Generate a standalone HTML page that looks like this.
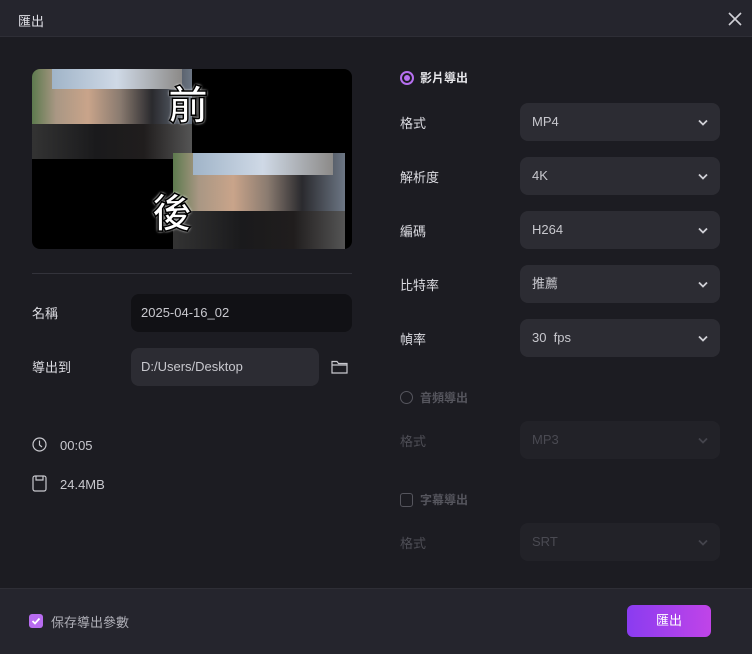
<!DOCTYPE html><html><head><meta charset="utf-8"><style>
*{margin:0;padding:0;box-sizing:border-box}
body{width:752px;height:654px;background:#1c1c22;font-family:"Liberation Sans","Noto Sans CJK TC",sans-serif;color:#d8d8de;font-size:13px;position:relative;overflow:hidden}
.a{position:absolute}
.hdr{left:0;top:0;width:752px;height:37px;background:#25252d;border-bottom:1px solid #2e2e36}
.ftr{left:0;top:588px;width:752px;height:66px;background:#25252d;border-top:1px solid #2e2e36}
.lbl{font-size:13px;color:#dcdce2}
.sel{width:200px;height:38px;background:#2c2c33;border-radius:8px;left:520px;padding-left:12px;line-height:38px;color:#c8c8ce}
.sel.d{background:#222228;color:#4a4a52}
.sel svg{position:absolute;right:12px;top:16px}
.photo{background:linear-gradient(90deg,#5d7a4e 0%,#a99784 15%,#c9a48a 35%,#8a7b70 55%,#2a2a2e 75%,#6c7684 100%)}
</style></head><body>
<div class="a hdr"></div>
<div class="a" style="left:18px;top:11px;font-size:13px;color:#e0e0e6">匯出</div>
<svg class="a" style="left:728px;top:12px" width="14" height="14"><path d="M1 1L13 13M13 1L1 13" stroke="#d0d0d6" stroke-width="1.6"/></svg>

<div class="a" style="left:32px;top:69px;width:320px;height:180px;background:#000;border-radius:8px;overflow:hidden">
 <div class="a photo" style="left:0;top:0;width:160px;height:90px"><div class="a" style="left:0;top:55px;width:160px;height:35px;background:linear-gradient(90deg,#333,#1a1a1c 40%,#201d1d 70%,#555)"></div><div class="a" style="left:20px;top:0;width:130px;height:20px;background:linear-gradient(90deg,#a0b4c8,#cfd9e6,#8c8a88)"></div></div>
 <div class="a photo" style="left:141px;top:84px;width:172px;height:96px"><div class="a" style="left:0;top:58px;width:172px;height:38px;background:linear-gradient(90deg,#333,#1a1a1c 40%,#201d1d 70%,#555)"></div><div class="a" style="left:20px;top:0;width:140px;height:22px;background:linear-gradient(90deg,#a0b4c8,#cfd9e6,#8c8a88)"></div></div>
 <div class="a" style="left:136px;top:4px;font-size:40px;font-weight:bold;color:#fff;-webkit-text-stroke:1.5px #000;text-shadow:0 0 3px #fff,0 0 2px #fff;font-family:'Noto Sans CJK TC',sans-serif">前</div>
 <div class="a" style="left:120px;top:112px;font-size:40px;font-weight:bold;color:#fff;-webkit-text-stroke:1.5px #000;text-shadow:0 0 3px #fff,0 0 2px #fff;font-family:'Noto Sans CJK TC',sans-serif">後</div>
</div>
<div class="a" style="left:32px;top:273px;width:320px;height:1px;background:#33333b"></div>

<div class="a lbl" style="left:32px;top:303px">名稱</div>
<div class="a" style="left:131px;top:294px;width:221px;height:38px;background:#111115;border-radius:8px;padding-left:10px;line-height:38px;color:#c8c8ce">2025-04-16_02</div>
<div class="a lbl" style="left:32px;top:357px">導出到</div>
<div class="a" style="left:131px;top:348px;width:188px;height:38px;background:#2c2c33;border-radius:8px;padding-left:10px;line-height:38px;color:#c8c8ce">D:/Users/Desktop</div>
<svg class="a" style="left:331px;top:359px" width="17" height="15"><path d="M1 2.5h5l1.5 2H16v9.5H1z M1 6h15" fill="none" stroke="#c8c8ce" stroke-width="1.2"/></svg>

<svg class="a" style="left:32px;top:437px" width="15" height="15"><circle cx="7.5" cy="7.5" r="6.5" fill="none" stroke="#c8c8ce" stroke-width="1.2"/><path d="M7.5 3.5v4.5l2.5 2" fill="none" stroke="#c8c8ce" stroke-width="1.2"/></svg>
<div class="a" style="left:60px;top:438px;color:#c8c8ce">00:05</div>
<svg class="a" style="left:32px;top:475px" width="15" height="17"><rect x="1" y="1" width="13" height="15" rx="2" fill="none" stroke="#c8c8ce" stroke-width="1.2"/><path d="M4 1v4h7V1" fill="none" stroke="#c8c8ce" stroke-width="1.2"/></svg>
<div class="a" style="left:60px;top:477px;color:#c8c8ce">24.4MB</div>

<div class="a" style="left:400px;top:71px;width:14px;height:14px;border-radius:50%;border:2px solid #b66ff0;background:#1c1c22"><div style="margin:2px;width:6px;height:6px;border-radius:50%;background:#b66ff0"></div></div>
<div class="a" style="left:420px;top:69px;font-weight:bold;font-size:12px;color:#e6e6ea">影片導出</div>

<div class="a lbl" style="left:400px;top:113px">格式</div>
<div class="a sel" style="top:103px">MP4<svg width="10" height="8"><path d="M1 1.5L5 5.5L9 1.5" fill="none" stroke="#d0d0d6" stroke-width="1.8"/></svg></div>
<div class="a lbl" style="left:400px;top:167px">解析度</div>
<div class="a sel" style="top:157px">4K<svg width="10" height="8"><path d="M1 1.5L5 5.5L9 1.5" fill="none" stroke="#d0d0d6" stroke-width="1.8"/></svg></div>
<div class="a lbl" style="left:400px;top:221px">編碼</div>
<div class="a sel" style="top:211px">H264<svg width="10" height="8"><path d="M1 1.5L5 5.5L9 1.5" fill="none" stroke="#d0d0d6" stroke-width="1.8"/></svg></div>
<div class="a lbl" style="left:400px;top:275px">比特率</div>
<div class="a sel" style="top:265px">推薦<svg width="10" height="8"><path d="M1 1.5L5 5.5L9 1.5" fill="none" stroke="#d0d0d6" stroke-width="1.8"/></svg></div>
<div class="a lbl" style="left:400px;top:329px">幀率</div>
<div class="a sel" style="top:319px">30&nbsp; fps<svg width="10" height="8"><path d="M1 1.5L5 5.5L9 1.5" fill="none" stroke="#d0d0d6" stroke-width="1.8"/></svg></div>

<div class="a" style="left:400px;top:391px;width:13px;height:13px;border-radius:50%;border:1.5px solid #55555d"></div>
<div class="a" style="left:420px;top:389px;font-size:12px;color:#55555d;font-weight:bold">音頻導出</div>
<div class="a" style="left:400px;top:431px;color:#4e4e56">格式</div>
<div class="a sel d" style="top:421px">MP3<svg width="10" height="8"><path d="M1 1.5L5 5.5L9 1.5" fill="none" stroke="#44444c" stroke-width="1.8"/></svg></div>

<div class="a" style="left:400px;top:493px;width:13px;height:14px;border-radius:3px;border:1.5px solid #55555d"></div>
<div class="a" style="left:420px;top:491px;font-size:12px;color:#55555d;font-weight:bold">字幕導出</div>
<div class="a" style="left:400px;top:533px;color:#4e4e56">格式</div>
<div class="a sel d" style="top:523px">SRT<svg width="10" height="8"><path d="M1 1.5L5 5.5L9 1.5" fill="none" stroke="#44444c" stroke-width="1.8"/></svg></div>

<div class="a ftr"></div>
<div class="a" style="left:29px;top:614px;width:14px;height:14px;border-radius:3px;background:#b86cf0"><svg width="14" height="14"><path d="M3.5 7l2.5 2.5 4.5-5" fill="none" stroke="#fff" stroke-width="1.8"/></svg></div>
<div class="a" style="left:51px;top:612px;color:#b0b0b8">保存導出參數</div>
<div class="a" style="left:627px;top:605px;width:84px;height:32px;border-radius:6px;background:linear-gradient(90deg,#8a3cf0,#c044e8);color:#fff;text-align:center;line-height:32px">匯出</div>
</body></html>
